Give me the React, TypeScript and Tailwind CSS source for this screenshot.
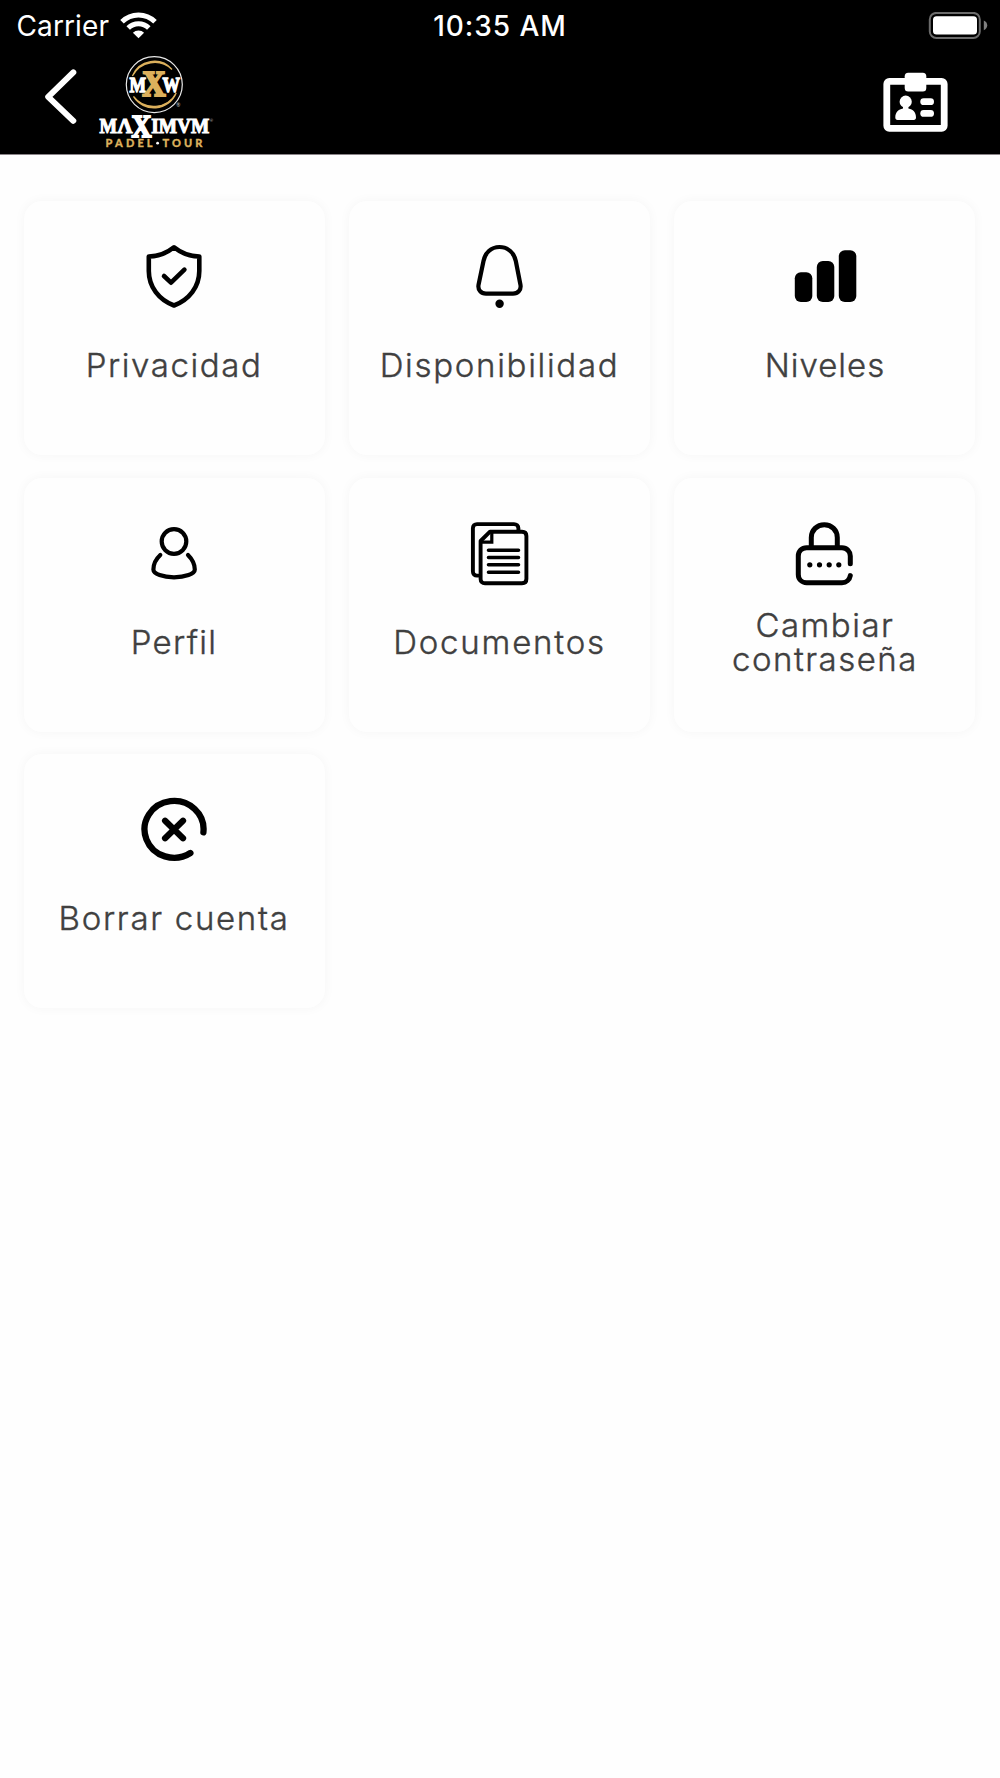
import type { ReactNode } from "react";

function Glyph({ children, width = 4.2 }: { children: ReactNode; width?: number }) {
  return (
    <svg
      viewBox="0 0 66 66"
      className="h-[66px] w-[66px]"
      fill="none"
      stroke="#000"
      strokeWidth={width}
      strokeLinecap="round"
      strokeLinejoin="round"
    >
      {children}
    </svg>
  );
}

const ShieldIcon = () => (
  <Glyph width={4.6}>
    <path d="M33 3.3C26 9 17 12.3 7.8 12.5V27C7.8 43 18 56 33 61.5C48 56 58.3 43 58.3 27V12.5C49 12.3 40 9 33 3.3Z" />
    <path d="M23 32L30 38.7L43.4 25.6" />
  </Glyph>
);

const BellIcon = () => (
  <Glyph>
    <path d="M32.5 3C24 3 18 9 16.5 17L11.5 41C10.7 46 14 49.7 19 49.7H46C51 49.7 54.3 46 53.5 41L48.8 17C47.2 9 41 3 32.5 3Z" />
    <circle cx="32.6" cy="59.7" r="4.2" fill="#000" stroke="none" />
  </Glyph>
);

const BarsIcon = () => (
  <Glyph>
    <g fill="#000" stroke="none">
      <rect x="2.8" y="28.3" width="17.5" height="29.8" rx="6" />
      <rect x="24.8" y="17" width="17.5" height="41.1" rx="6" />
      <rect x="46.8" y="6.2" width="17.5" height="51.9" rx="6" />
    </g>
  </Glyph>
);

const UserIcon = () => (
  <Glyph>
    <circle cx="33" cy="20.5" r="12.3" />
    <path d="M19.3 34C15 38 12.4 44 12.4 48.5C12.4 53 22 56.3 33 56.3S53.8 53 53.8 48.5C53.8 44 51 38 47 34" />
  </Glyph>
);

const DocsIcon = () => (
  <Glyph width={3.9}>
    <path d="M11.5 54.6H10C7.6 54.6 5.9 53 5.9 50.5V7.2C5.9 4.8 7.6 3.1 10 3.1H47C49.5 3.1 51.4 4.8 51.4 7.2V9.8" />
    <path d="M23 10.7H55C57.8 10.7 59.4 12.4 59.4 15V58C59.4 60.6 57.8 62.3 55 62.3H18C15.3 62.3 13.6 60.6 13.6 58V20Z" />
    <path d="M24.8 11V21.2H14" strokeLinejoin="miter" strokeWidth="3.2" />
    <path d="M21.5 29.2H51.5M21.5 36.5H51.5M21.5 43.8H51.5M21.5 51.2H51.5" strokeWidth="3.6" />
  </Glyph>
);

const LockIcon = () => (
  <Glyph width={5}>
    <path d="M19.3 26V16.5C19.3 9.3 25 3.7 32.3 3.7S45.3 9.3 45.3 16.5V26" />
    <path d="M58.3 42.8V35C58.3 30.5 54.8 26.7 50 26.7H14.6C9.8 26.7 6.3 30.3 6.3 35V53.4C6.3 58.2 9.8 61.7 14.6 61.7H50C54.3 61.7 57.6 58.8 58.3 54.6" />
    <g fill="#000" stroke="none">
      <circle cx="17.8" cy="43.8" r="2.6" />
      <circle cx="27.5" cy="43.8" r="2.6" />
      <circle cx="37.2" cy="43.8" r="2.6" />
      <circle cx="46.8" cy="43.8" r="2.6" />
    </g>
  </Glyph>
);

const CloseIcon = () => (
  <Glyph width={6.3}>
    <path d="M62.4 35.3A29.5 28.4 0 1 0 49.4 56" />
    <path d="M24.1 23.8L42 41.2M42 23.8L24.1 41.2" />
  </Glyph>
);

const Logo = () => (
  <svg viewBox="95 53 120 97" className="ml-[15px] h-[97px] w-[120px]">
    <circle cx="154.3" cy="84.6" r="28" fill="none" stroke="#e8e8e8" strokeWidth="1.2" />
    <path d="M132.4 76A23.5 23.5 0 0 1 172 69.5A25 25 0 0 0 132.4 76Z" fill="#dcb05c" stroke="#dcb05c" strokeWidth="1.3" />
    <path d="M133.5 96.5A24 24 0 0 0 176.2 93A25.5 25.5 0 0 1 133.5 96.5Z" fill="#dcb05c" stroke="#dcb05c" strokeWidth="1.3" />
    <g fontFamily="'Liberation Serif', serif" fontWeight="700" fill="#fff">
      <g stroke="#fff" strokeWidth="1.3">
        <text x="129.5" y="91.7" fontSize="21" textLength="16.5" lengthAdjust="spacingAndGlyphs">M</text>
        <text x="162.5" y="91.7" fontSize="21" textLength="17.5" lengthAdjust="spacingAndGlyphs">W</text>
      </g>
      <text x="142.3" y="96.2" fontSize="35" fill="#dcb05c" stroke="#dcb05c" strokeWidth="2" textLength="23.4" lengthAdjust="spacingAndGlyphs">X</text>
      <g stroke="#fff" strokeWidth="1.1">
        <text x="99.6" y="133.4" fontSize="21" textLength="17.5" lengthAdjust="spacingAndGlyphs">M</text>
        <text x="117.4" y="133.4" fontSize="21" textLength="15" lengthAdjust="spacingAndGlyphs">Λ</text>
        <text x="131.5" y="136.7" fontSize="31" strokeWidth="1.8" textLength="20" lengthAdjust="spacingAndGlyphs">X</text>
        <text x="151.2" y="133.4" fontSize="21" textLength="58" lengthAdjust="spacingAndGlyphs">IMVM</text>
      </g>
    </g>
    <g fontFamily="Lato, sans-serif" fill="#ccc">
      <text x="176.3" y="107" fontSize="5">®</text>
      <text x="209.8" y="122" fontSize="4">®</text>
    </g>
    <g fontFamily="Lato, sans-serif" fontWeight="900" fontSize="11" fill="#dcb05c" stroke="#dcb05c" strokeWidth="0.3">
      <text x="105.6" y="147" textLength="47" lengthAdjust="spacing">PADEL</text>
      <text x="162.5" y="147" textLength="40" lengthAdjust="spacing">TOUR</text>
    </g>
    <circle cx="157.6" cy="143.2" r="1.4" fill="#fff" />
  </svg>
);

const StatusBar = () => (
  <div className="grid h-[51px] grid-cols-3 items-center">
    <div className="flex items-center gap-[11px] pl-[16.5px]">
      <span className="text-[28px] leading-[50px] tracking-[0.12px]">Carrier</span>
      <svg viewBox="0 0 37 27" className="h-[27px] w-[37px]" fill="none" stroke="#fff" strokeWidth="5">
        <path d="M2 9.7A23.4 23.4 0 0 1 35 9.7" />
        <path d="M8.2 16A14.6 14.6 0 0 1 28.8 16" />
        <path d="M18.5 26.3L12.9 20.7A8 8 0 0 1 24.1 20.7Z" fill="#fff" stroke="none" />
      </svg>
    </div>
    <span className="text-center text-[28px] leading-[50px] font-medium tracking-[0.95px]">10:35 AM</span>
    <svg viewBox="0 0 60 28" className="mr-3 h-7 w-[60px] justify-self-end">
      <rect x="1.8" y="0.9" width="50" height="25" rx="6.5" fill="none" stroke="#6b6b6b" strokeWidth="2" />
      <rect x="5" y="4.2" width="44" height="18.3" rx="3.5" fill="#fff" />
      <path d="M55.8 8.4C58.3 9.4 59.2 11.2 59.2 13.3S58.3 17.2 55.8 18.2Z" fill="#808080" />
    </svg>
  </div>
);

const Header = () => (
  <header className="h-[155px] border-b border-[#8a8488] bg-black font-['Inter',sans-serif] text-white">
    <StatusBar />
    <div className="flex items-start pt-[2px] pl-[45px]">
      <button aria-label="Atrás" className="mt-[14px]">
        <svg viewBox="0 0 35 60" className="h-[60px] w-[35px]" fill="none" stroke="#fff" strokeWidth="6" strokeLinecap="round" strokeLinejoin="round">
          <path d="M28.3 5.4L3.2 29.8L28.3 53.8" />
        </svg>
      </button>
      <Logo />
      <button aria-label="Carnet" className="mt-[18.5px] mr-[52px] ml-auto">
        <svg viewBox="883 71 65 60" className="h-[60px] w-[65px]">
          <rect x="886.8" y="80.4" width="57.4" height="46.9" rx="2.5" fill="none" stroke="#fff" strokeWidth="6.8" />
          <rect x="904.7" y="71.8" width="21.6" height="18.6" rx="3.5" fill="#fff" />
          <circle cx="905.7" cy="100.7" r="6.1" fill="#fff" />
          <path d="M903 104H908.4V107.6C913 108.3 916 111.5 916 116.5C916 118 915.2 119 913.8 119H897.5C896.1 119 895.3 118 895.3 116.5C895.3 111.5 898.5 108.3 903 107.6Z" fill="#fff" />
          <rect x="920.3" y="97.3" width="13.7" height="6.8" rx="3.4" fill="#fff" />
          <rect x="920.3" y="109" width="13.7" height="6.8" rx="3.4" fill="#fff" />
        </svg>
      </button>
    </div>
  </header>
);

const items = [
  { icon: <ShieldIcon />, label: "Privacidad", spacing: "tracking-[1.6px]" },
  { icon: <BellIcon />, label: "Disponibilidad", spacing: "tracking-[1.7px]" },
  { icon: <BarsIcon />, label: "Niveles", spacing: "tracking-[1px]" },
  { icon: <UserIcon />, label: "Perfil", spacing: "tracking-[1.3px]" },
  { icon: <DocsIcon />, label: "Documentos", spacing: "tracking-[1.8px]" },
  { icon: <LockIcon />, label: "Cambiar contraseña", spacing: "tracking-[1.5px]" },
  { icon: <CloseIcon />, label: "Borrar cuenta", spacing: "tracking-[1.7px]" },
];

export default function App() {
  return (
    <div className="min-h-screen bg-[#fefefe]">
      <Header />
      <main className="grid grid-cols-3 gap-x-[24.5px] gap-y-[22.5px] pt-[46px] pr-[24.6px] pl-[23.6px]">
        {items.map(({ icon, label, spacing }) => (
          <button
            key={label}
            className="flex h-[254px] flex-col items-center rounded-[18px] bg-[#fefefe] pt-[43px] shadow-[0_0_12px_rgba(0,0,0,0.04)]"
          >
            {icon}
            <span className="mt-[21px] flex h-[68px] w-[270px] items-center justify-center text-center">
              <span className={"font-['Inter',sans-serif] text-[33px] leading-[34px] font-light text-[#404040] [-webkit-text-stroke:0.4px_#404040] " + spacing}>
                {label}
              </span>
            </span>
          </button>
        ))}
      </main>
    </div>
  );
}
